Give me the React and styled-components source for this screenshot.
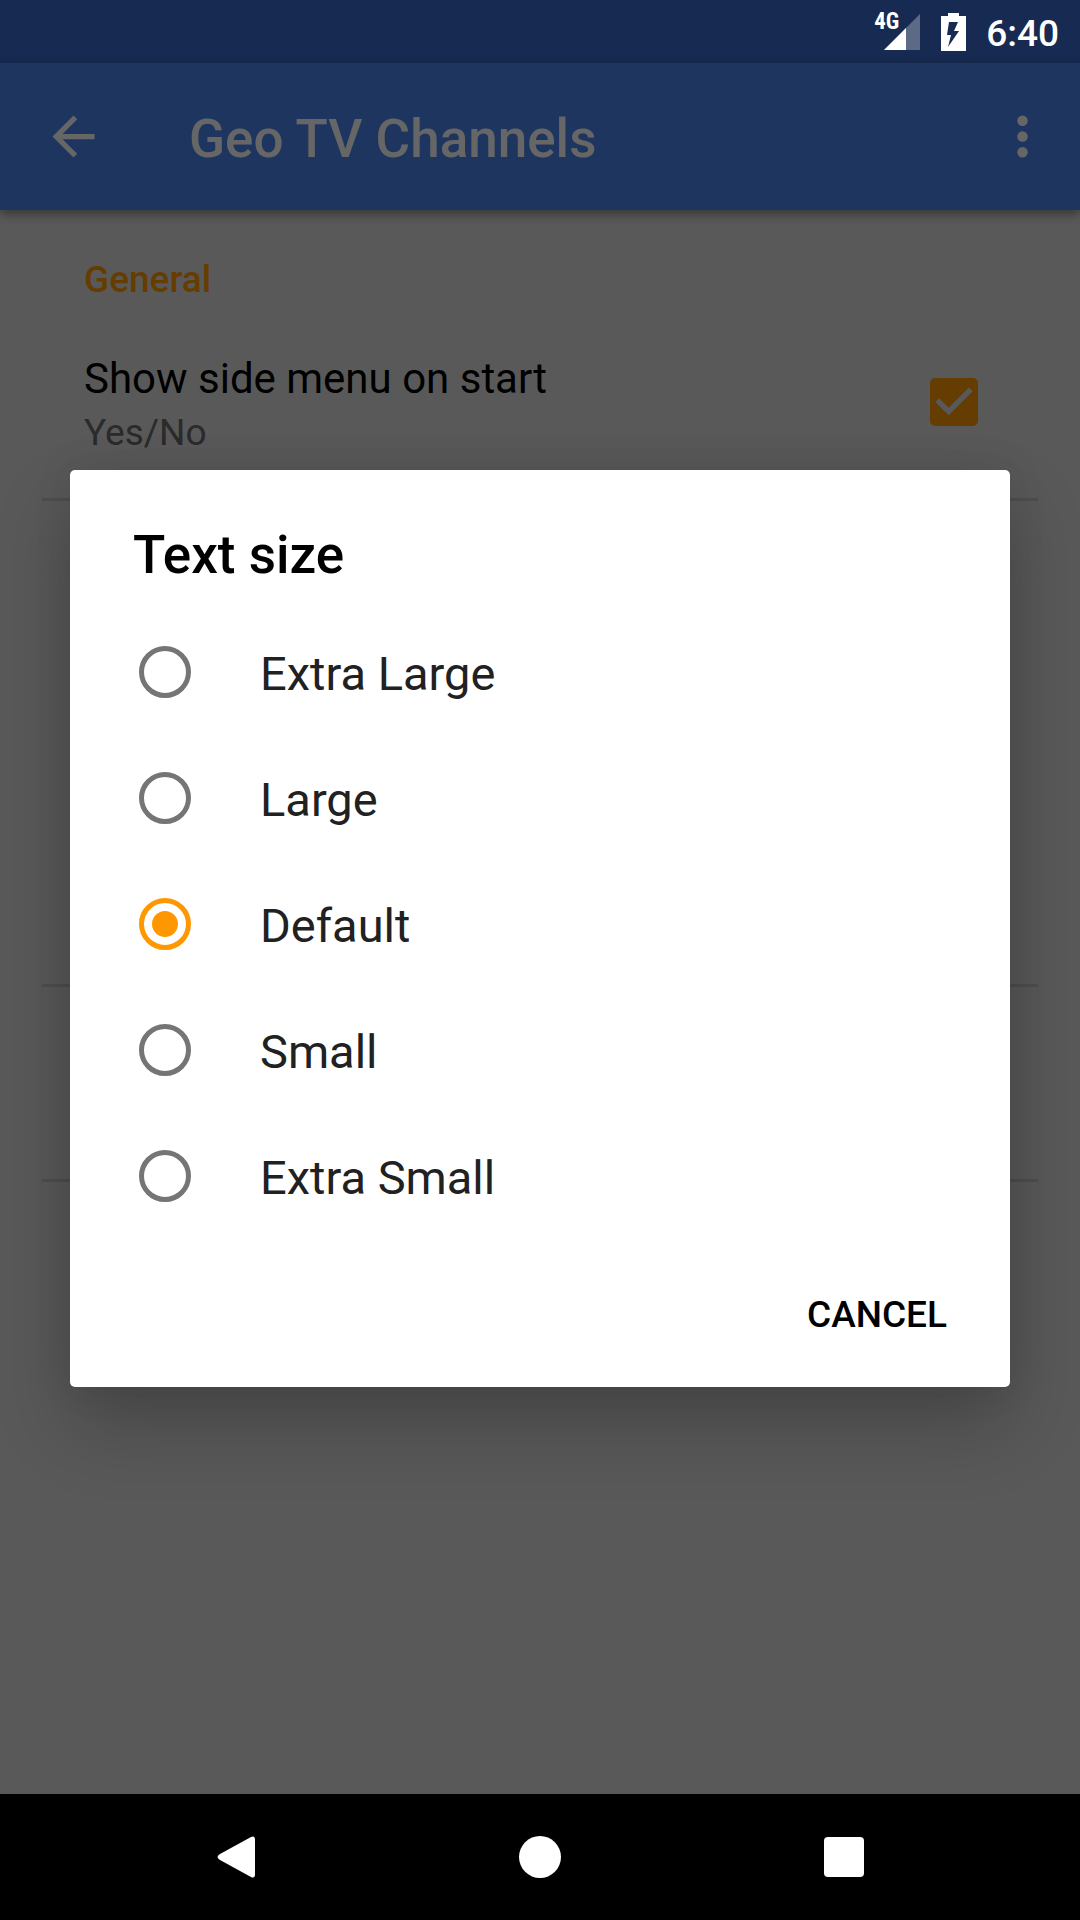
import { useState } from "react";
import styled, { createGlobalStyle } from "styled-components";

const GlobalStyle = createGlobalStyle`
  * {
    box-sizing: border-box;
  }

  body {
    margin: 0;
    font-family: Roboto, "Liberation Sans", sans-serif;
    background: #dfdfdf;
  }

  h1, h2, p {
    margin: 0;
  }

  button {
    border: none;
    padding: 0;
    background: none;
    color: inherit;
    font-family: inherit;
    cursor: pointer;
  }
`;

const Screen = styled.div`
  min-height: 100vh;
  display: flex;
  flex-direction: column;
`;

/* ---------- status bar ---------- */

const StatusBar = styled.div`
  height: 63px;
  padding-right: 21px;
  display: flex;
  align-items: center;
  justify-content: flex-end;
  gap: 20px;
  background: #172a52;
  color: white;
`;

const Network = styled.div`
  position: relative;
  width: 46px;
  height: 38px;
  display: flex;
  justify-content: flex-end;
`;

const NetworkType = styled.span`
  position: absolute;
  left: 0;
  top: 1px;
  font-family: "Roboto Condensed", Roboto, sans-serif;
  font-size: 23px;
  font-weight: 700;
  line-height: 16px;
`;

const Battery = styled.svg`
  width: 25px;
  height: 38px;
  margin-left: 1px;
`;

const Clock = styled.span`
  padding-top: 4px;
  font-size: 37px;
  font-weight: 500;
  line-height: 44px;
`;

/* ---------- app ---------- */

const AppArea = styled.div`
  position: relative;
  flex: 1;
  display: flex;
  flex-direction: column;
`;

const AppBar = styled.header`
  height: 147px;
  padding: 0 26px 0 42px;
  display: flex;
  align-items: center;
  background: #4b85f0;
  color: white;
  box-shadow: 0 4px 10px rgba(0, 0, 0, 0.4);
`;

const IconButton = styled.button`
  width: 63px;
  height: 63px;
  display: flex;
`;

const AppTitle = styled.h1`
  flex: 1;
  padding: 4px 0 0 84px;
  font-size: 53px;
  font-weight: 500;
  line-height: 62px;
`;

const Settings = styled.main`
  padding: 0 42px;
`;

const Section = styled.section`
  min-height: ${(props) => props.$height || 0}px;
  padding: 48px 60px 43px 42px;
  border-bottom: 3px solid #c4c4c4;
`;

const SectionTitle = styled.h2`
  margin-bottom: 52px;
  color: #ff9800;
  font-size: 37px;
  font-weight: 500;
  line-height: 44px;
`;

const Preference = styled.label`
  display: flex;
  align-items: center;
  justify-content: space-between;
`;

const PreferenceText = styled.span`
  display: flex;
  flex-direction: column;
  gap: 7px;
  color: black;
  font-size: 42px;
  line-height: 50px;
`;

const Summary = styled.span`
  color: #6b6b6b;
  font-size: 37px;
  line-height: 44px;
`;

const CheckHolder = styled.span`
  display: grid;
  margin-bottom: 6px;

  > * {
    grid-area: 1 / 1;
  }

  svg {
    pointer-events: none;
  }
`;

const CheckBox = styled.input`
  appearance: none;
  width: 48px;
  height: 48px;
  margin: 0;
  border: 5px solid #757575;
  border-radius: 5px;

  &:checked {
    background: #ff9800;
    border-color: #ff9800;
  }
`;

/* ---------- dialog ---------- */

const Scrim = styled.div`
  position: absolute;
  inset: 0;
  padding: 0 70px;
  display: flex;
  align-items: center;
  background: rgba(0, 0, 0, 0.6);
`;

const Dialog = styled.form`
  width: 100%;
  padding-top: 54px;
  border-radius: 5px;
  background: white;
  box-shadow: 0 38px 76px rgba(0, 0, 0, 0.22), 0 0 40px rgba(0, 0, 0, 0.08);
`;

const DialogTitle = styled.h2`
  margin-bottom: 23px;
  padding: 0 63px;
  font-size: 53px;
  font-weight: 500;
  line-height: 62px;
`;

const Option = styled.label`
  height: 126px;
  padding: 0 63px 0 69px;
  display: flex;
  align-items: center;
  gap: 69px;
  color: #212121;
  font-size: 47px;
  line-height: 56px;
`;

const OptionText = styled.span`
  padding-top: 4px;
`;

const Radio = styled.input`
  appearance: none;
  width: 52px;
  height: 52px;
  margin: 0;
  padding: 8px;
  border: 5px solid #757575;
  border-radius: 50%;
  background-clip: content-box;

  &:checked {
    border-color: #ff9800;
    background-image: radial-gradient(circle, #ff9800 13px, transparent 14px);
  }
`;

const DialogActions = styled.div`
  height: 148px;
  padding: 4px 63px 0;
  display: flex;
  align-items: center;
  justify-content: flex-end;
`;

const CancelButton = styled.button`
  font-size: 37px;
  font-weight: 500;
  line-height: 44px;
`;

/* ---------- navigation bar ---------- */

const NavBar = styled.nav`
  height: 126px;
  padding: 0 80px;
  display: flex;
  align-items: center;
  justify-content: center;
  background: black;
  color: white;
`;

const NavButton = styled.button`
  width: 304px;
  height: 126px;
  display: flex;
  align-items: center;
  justify-content: center;
`;

const sizes = ["Extra Large", "Large", "Default", "Small", "Extra Small"];

export default function App() {
  const [open, setOpen] = useState(true);
  const [size, setSize] = useState("Default");

  return (
    <>
      <GlobalStyle />
      <Screen>
        <StatusBar>
          <Network>
            <NetworkType>4G</NetworkType>
            <svg width="37" height="38" viewBox="0 0 37 38" fill="white">
              <path d="M37 1v36H1z" opacity="0.3" />
              <path d="M23 15v22H1z" />
            </svg>
          </Network>
          <Battery viewBox="0 0 25 38">
            <path
              fill="white"
              fillRule="evenodd"
              d="M7 0h11v3h7v35H0V3h7zM8 9L6 22h4L7 34 18 18h-5l4-9z"
            />
          </Battery>
          <Clock>6:40</Clock>
        </StatusBar>

        <AppArea>
          <AppBar>
            <IconButton type="button" aria-label="Back">
              <svg width="63" height="63" viewBox="0 0 24 24" fill="white">
                <path d="M20 11H7.83l5.59-5.59L12 4l-8 8 8 8 1.41-1.41L7.83 13H20v-2z" />
              </svg>
            </IconButton>
            <AppTitle>Geo TV Channels</AppTitle>
            <IconButton type="button" aria-label="More options">
              <svg width="63" height="63" viewBox="0 0 24 24" fill="white">
                <circle cx="12" cy="6" r="2" />
                <circle cx="12" cy="12" r="2" />
                <circle cx="12" cy="18" r="2" />
              </svg>
            </IconButton>
          </AppBar>

          <Settings>
            <Section>
              <SectionTitle>General</SectionTitle>
              <Preference>
                <PreferenceText>
                  Show side menu on start
                  <Summary>Yes/No</Summary>
                </PreferenceText>
                <CheckHolder>
                  <CheckBox type="checkbox" defaultChecked />
                  <svg width="48" height="48" viewBox="3 3 18 18" fill="#dfdfdf">
                    <path d="M10 17l-5-5 1.41-1.41L10 14.17l7.59-7.59L19 8l-9 9z" />
                  </svg>
                </CheckHolder>
              </Preference>
            </Section>
            <Section $height={486} />
            <Section $height={195} />
          </Settings>

          {open && (
            <Scrim>
              <Dialog role="dialog" aria-labelledby="dialog-title">
                <DialogTitle id="dialog-title">Text size</DialogTitle>
                {sizes.map((name) => (
                  <Option key={name}>
                    <Radio
                      type="radio"
                      name="size"
                      value={name}
                      checked={size === name}
                      onChange={() => setSize(name)}
                    />
                    <OptionText>{name}</OptionText>
                  </Option>
                ))}
                <DialogActions>
                  <CancelButton type="button" onClick={() => setOpen(false)}>
                    CANCEL
                  </CancelButton>
                </DialogActions>
              </Dialog>
            </Scrim>
          )}
        </AppArea>

        <NavBar>
          <NavButton type="button" aria-label="Back">
            <svg width="42" height="42" viewBox="0 0 42 42" fill="white">
              <path d="M5 18L36 1q4-2 4 3v34q0 5-4 3L5 24q-5-3 0-6z" />
            </svg>
          </NavButton>
          <NavButton type="button" aria-label="Home">
            <svg width="42" height="42" viewBox="0 0 42 42" fill="white">
              <circle cx="21" cy="21" r="21" />
            </svg>
          </NavButton>
          <NavButton type="button" aria-label="Recent apps">
            <svg width="42" height="42" viewBox="0 0 42 42" fill="white">
              <rect x="1" y="1" width="40" height="40" rx="4" />
            </svg>
          </NavButton>
        </NavBar>
      </Screen>
    </>
  );
}
